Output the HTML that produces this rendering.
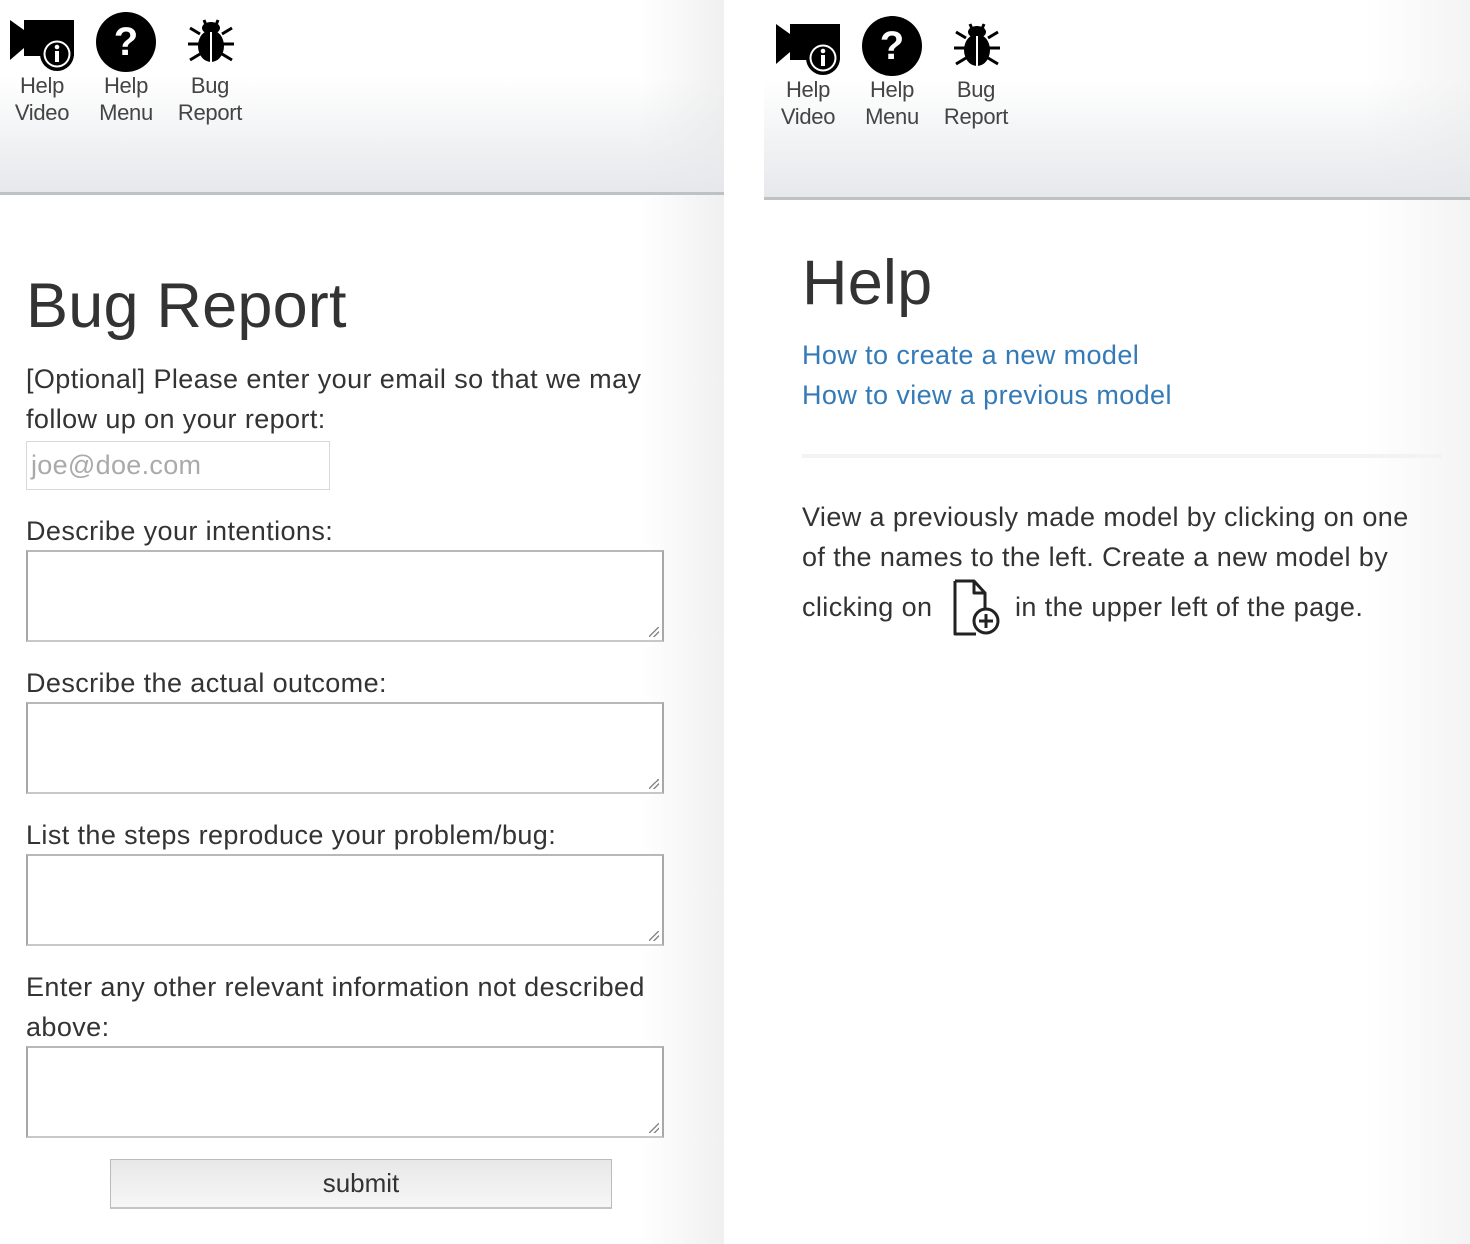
<!DOCTYPE html>
<html><head><meta charset="utf-8"><style>
*{margin:0;padding:0;box-sizing:border-box}
body{width:1470px;height:1244px;background:#fff;position:relative;overflow:hidden;font-family:"Liberation Sans",Arial,sans-serif;color:#333}
.abs{position:absolute;white-space:nowrap}
.panelL{position:absolute;left:0;top:0;width:724px;height:1244px;background:linear-gradient(to right,#fff 0,#fff 640px,#f0f0f0 724px)}
.panelR{position:absolute;left:764px;top:0;width:706px;height:1244px;background:linear-gradient(to right,#fff 0,#fff 600px,#f4f4f4 706px)}
.hdr{position:absolute;left:0;top:0;width:100%;background:linear-gradient(to bottom,rgba(255,255,255,0) 0,rgba(255,255,255,0) 40%,#e6e8eb 100%);border-bottom:3px solid #bfc2c5}
.lbl{position:absolute;font-size:22px;line-height:27px;text-align:center;color:#444;letter-spacing:-0.3px}
.t{font-size:27px;line-height:40px;letter-spacing:0.4px;color:#333}
.ta{position:absolute;left:26px;width:638px;height:92px;border:2px solid #a8a8a8;border-top-color:#b8b8b8;border-bottom-color:#c8c8c8;background:#fff}
.ta:after{content:"";position:absolute;right:3px;bottom:3px;width:10px;height:10px;background:linear-gradient(135deg,transparent 45%,#888 45%,#888 55%,transparent 55%,transparent 70%,#888 70%,#888 80%,transparent 80%)}
a{color:#337ab7;text-decoration:none}
</style></head><body>
<div class="panelL">
  <div class="hdr" style="height:195px"></div>
  <svg class="abs" style="left:10px;top:18px" width="66" height="56" viewBox="0 0 66 56">
    <polygon points="0,2 14,12 14,2 64,2 64,38 14,38 14,30 0,42" fill="#000"/>
    <circle cx="47" cy="36" r="17" fill="#000"/><circle cx="47" cy="36" r="13.5" fill="#fff"/><circle cx="47" cy="36" r="11.5" fill="#000"/>
    <circle cx="47" cy="29" r="2.3" fill="#fff"/><rect x="45" y="33" width="4" height="11" fill="#fff"/>
  </svg>
  <svg class="abs" style="left:96px;top:12px" width="60" height="60" viewBox="0 0 60 60">
    <circle cx="30" cy="30" r="30" fill="#000"/>
    <text x="30" y="43" font-family="Liberation Sans" font-weight="bold" font-size="40" fill="#fff" text-anchor="middle">?</text>
  </svg>
  <svg class="abs" style="left:186px;top:14px" width="50" height="50" viewBox="0 0 50 50">
    <g stroke="#000" stroke-width="3" fill="none"><path d="M14 20 L4 14 M14 30 H2 M14 40 L4 46 M36 20 L46 14 M36 30 H48 M36 40 L46 46 M18 6 L20 11 M32 6 L30 11"/></g>
    <ellipse cx="25" cy="14" rx="9" ry="6" fill="#000"/>
    <ellipse cx="25" cy="32" rx="13" ry="16" fill="#000"/>
    <rect x="24" y="18" width="2" height="30" fill="#fff"/>
  </svg>
  <div class="lbl" style="left:2px;top:72px;width:80px">Help<br>Video</div>
  <div class="lbl" style="left:86px;top:72px;width:80px">Help<br>Menu</div>
  <div class="lbl" style="left:170px;top:72px;width:80px">Bug<br>Report</div>

  <div class="abs" style="left:26px;top:271px;font-size:63px;line-height:70px;color:#333;letter-spacing:0.2px">Bug Report</div>
  <div class="abs t" style="left:26px;top:359px">[Optional] Please enter your email so that we may<br>follow up on your report:</div>
  <div class="abs" style="left:26px;top:441px;width:304px;height:49px;border:1px solid #d8d8d8;background:#fff;font-size:27px;line-height:47px;color:#aaa;padding-left:4px;letter-spacing:0.3px">joe@doe.com</div>
  <div class="abs t" style="left:26px;top:511px">Describe your intentions:</div>
  <div class="ta" style="top:550px"></div>
  <div class="abs t" style="left:26px;top:663px">Describe the actual outcome:</div>
  <div class="ta" style="top:702px"></div>
  <div class="abs t" style="left:26px;top:815px">List the steps reproduce your problem/bug:</div>
  <div class="ta" style="top:854px"></div>
  <div class="abs t" style="left:26px;top:967px">Enter any other relevant information not described<br>above:</div>
  <div class="ta" style="top:1046px"></div>
  <div class="abs" style="left:110px;top:1159px;width:502px;height:50px;border:1px solid #bbb;border-bottom:2px solid #c4c4c4;background:linear-gradient(#e8e8e8,#f6f6f6);text-align:center;font-size:26px;line-height:46px;color:#333">submit</div>
</div>

<div class="panelR">
  <div class="hdr" style="height:200px"></div>
  <svg class="abs" style="left:12px;top:22px" width="66" height="56" viewBox="0 0 66 56">
    <polygon points="0,2 14,12 14,2 64,2 64,38 14,38 14,30 0,42" fill="#000"/>
    <circle cx="47" cy="36" r="17" fill="#000"/><circle cx="47" cy="36" r="13.5" fill="#fff"/><circle cx="47" cy="36" r="11.5" fill="#000"/>
    <circle cx="47" cy="29" r="2.3" fill="#fff"/><rect x="45" y="33" width="4" height="11" fill="#fff"/>
  </svg>
  <svg class="abs" style="left:98px;top:16px" width="60" height="60" viewBox="0 0 60 60">
    <circle cx="30" cy="30" r="30" fill="#000"/>
    <text x="30" y="43" font-family="Liberation Sans" font-weight="bold" font-size="40" fill="#fff" text-anchor="middle">?</text>
  </svg>
  <svg class="abs" style="left:188px;top:18px" width="50" height="50" viewBox="0 0 50 50">
    <g stroke="#000" stroke-width="3" fill="none"><path d="M14 20 L4 14 M14 30 H2 M14 40 L4 46 M36 20 L46 14 M36 30 H48 M36 40 L46 46 M18 6 L20 11 M32 6 L30 11"/></g>
    <ellipse cx="25" cy="14" rx="9" ry="6" fill="#000"/>
    <ellipse cx="25" cy="32" rx="13" ry="16" fill="#000"/>
    <rect x="24" y="18" width="2" height="30" fill="#fff"/>
  </svg>
  <div class="lbl" style="left:4px;top:76px;width:80px">Help<br>Video</div>
  <div class="lbl" style="left:88px;top:76px;width:80px">Help<br>Menu</div>
  <div class="lbl" style="left:172px;top:76px;width:80px">Bug<br>Report</div>

  <div class="abs" style="left:38px;top:248px;font-size:63px;line-height:70px;color:#333;letter-spacing:0.2px">Help</div>
  <div class="abs t" style="left:38px;top:335px"><a>How to create a new model</a><br><a>How to view a previous model</a></div>
  <div class="abs" style="left:38px;top:454px;width:640px;height:4px;background:#f3f3f3"></div>
  <div class="abs t" style="left:38px;top:497px">View a previously made model by clicking on one<br>of the names to the left. Create a new model by</div>
  <div class="abs t" style="left:38px;top:587px">clicking on</div>
  <svg class="abs" style="left:188px;top:579px" width="52" height="58" viewBox="0 0 52 58">
    <path d="M3 2 H22 L33 14 V30 M3 2 V55 H24" fill="none" stroke="#222" stroke-width="3" stroke-linejoin="round"/>
    <path d="M22 2 V14 H33" fill="none" stroke="#222" stroke-width="3" stroke-linejoin="round"/>
    <circle cx="34" cy="42" r="12" fill="#fff" stroke="#222" stroke-width="3"/>
    <path d="M34 35 V49 M27 42 H41" stroke="#222" stroke-width="3"/>
  </svg>
  <div class="abs t" style="left:251px;top:587px">in the upper left of the page.</div>
</div>
</body></html>
